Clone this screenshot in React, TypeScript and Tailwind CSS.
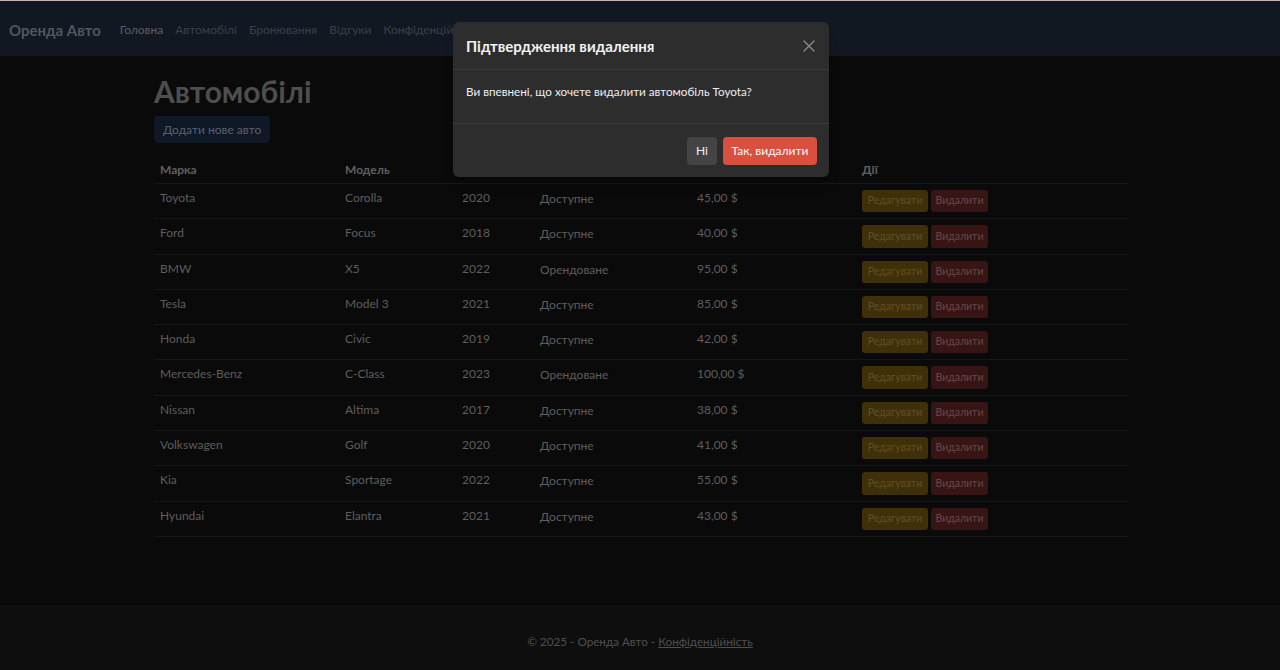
import { X } from "lucide-react"

type Car = {
  brand: string
  model: string
  year: number
  status: string
  price: string
}

const cars: Car[] = [
  { brand: "Toyota", model: "Corolla", year: 2020, status: "Доступне", price: "45,00 $" },
  { brand: "Ford", model: "Focus", year: 2018, status: "Доступне", price: "40,00 $" },
  { brand: "BMW", model: "X5", year: 2022, status: "Орендоване", price: "95,00 $" },
  { brand: "Tesla", model: "Model 3", year: 2021, status: "Доступне", price: "85,00 $" },
  { brand: "Honda", model: "Civic", year: 2019, status: "Доступне", price: "42,00 $" },
  { brand: "Mercedes-Benz", model: "C-Class", year: 2023, status: "Орендоване", price: "100,00 $" },
  { brand: "Nissan", model: "Altima", year: 2017, status: "Доступне", price: "38,00 $" },
  { brand: "Volkswagen", model: "Golf", year: 2020, status: "Доступне", price: "41,00 $" },
  { brand: "Kia", model: "Sportage", year: 2022, status: "Доступне", price: "55,00 $" },
  { brand: "Hyundai", model: "Elantra", year: 2021, status: "Доступне", price: "43,00 $" },
]

const navLinks = ["Головна", "Автомобілі", "Бронювання", "Відгуки", "Конфіденційність"]

export default function App() {
  return (
    <div
      className="relative flex h-[670px] flex-col overflow-hidden bg-[#0a0a0a]"
      style={{ fontFamily: "Lato, 'Open Sans', sans-serif" }}
    >
      {/* navbar */}
      <header className="h-[56px] shrink-0 border-t border-[#c9b3aa] bg-[#111822]">
        <div className="flex h-full items-center pl-[9px] pt-[3px]">
          <span className="mr-[19px] text-[15px] font-bold text-[#51565d]">Оренда Авто</span>
          <nav className="flex gap-[12px] text-[12px]">
            {navLinks.map((l, i) => (
              <span key={l} className={i === 0 ? "text-[#5a5f66]" : "text-[#3a4048]"}>
                {l}
              </span>
            ))}
          </nav>
        </div>
      </header>

      {/* main */}
      <main className="flex-1 px-[154px] pt-[17px]">
        <h1 className="text-[30px] font-bold leading-[36px] text-[#4e4e4e]">Автомобілі</h1>
        <button className="mt-[7px] h-[27px] rounded-[4px] bg-[#0f1827] px-[9px] text-[12px] text-[#59606b]">
          Додати нове авто
        </button>

        <table className="mt-[16px] w-[974px] table-fixed border-collapse text-[12px] text-[#5e5e5e]">
          <colgroup>
            <col className="w-[185px]" />
            <col className="w-[117px]" />
            <col className="w-[78px]" />
            <col className="w-[157px]" />
            <col className="w-[165px]" />
            <col />
          </colgroup>
          <thead>
            <tr className="border-b border-[#161616]">
              {["Марка", "Модель", "Рік", "Статус", "Ціна", "Дії"].map((h) => (
                <th key={h} className="px-[6px] pb-[4px] pt-[2px] text-left font-bold text-[#606060]">
                  {h}
                </th>
              ))}
            </tr>
          </thead>
          <tbody>
            {cars.map((c) => (
              <tr key={c.brand} className="border-b border-[#161616] align-top">
                <td className="px-[6px] pt-[5px]">{c.brand}</td>
                <td className="px-[6px] pt-[5px]">{c.model}</td>
                <td className="px-[6px] pt-[5px]">{c.year}</td>
                <td className="px-[6px] pt-[6px]">{c.status}</td>
                <td className="px-[6px] pt-[5px]">{c.price}</td>
                <td className="px-[6px] py-[6px]">
                  <div className="flex gap-[3px]">
                    <span className="flex h-[22.3px] w-[66px] items-center justify-center rounded-[3px] bg-[#40300a] text-[10.5px] text-[#5e5024]">
                      Редагувати
                    </span>
                    <span className="flex h-[22.3px] w-[57px] items-center justify-center rounded-[3px] bg-[#381515] text-[10.5px] text-[#6a4545]">
                      Видалити
                    </span>
                  </div>
                </td>
              </tr>
            ))}
          </tbody>
        </table>
      </main>

      {/* footer */}
      <footer className="flex h-[65px] shrink-0 justify-center bg-[#0e0e0e] pt-[28px] text-[11.7px] leading-[16px] text-[#4f4f4f]">
        <span>
          © 2025 - Оренда Авто - <span className="underline">Конфіденційність</span>
        </span>
      </footer>

      {/* modal */}
      <div className="absolute left-[453px] top-[22px] w-[376px] rounded-[6px] bg-[#2d2d2d] text-[#eeeeee] shadow-lg">
        <div className="flex h-[48px] items-center justify-between border-b border-[#3a3a3a] pl-[13px] pr-[10px]">
          <h5 className="pt-[2px] text-[15px] font-bold text-[#f2f2f2]">Підтвердження видалення</h5>
          <X className="h-[20px] w-[20px] text-[#8f8f8f]" strokeWidth={1.5} />
        </div>
        <div className="h-[54px] border-b border-[#3a3a3a] px-[13px] pt-[13px] text-[11.7px]">
          Ви впевнені, що хочете видалити автомобіль Toyota?
        </div>
        <div className="flex h-[53px] items-center justify-end gap-[6px] px-[12px] pt-[1px]">
          <button className="h-[28px] w-[30px] rounded-[4px] bg-[#444444] text-[12px] text-[#f0f0f0]">Ні</button>
          <button className="h-[28px] w-[94px] rounded-[4px] bg-[#d9503f] text-[12px] text-[#fafafa]">
            Так, видалити
          </button>
        </div>
      </div>
    </div>
  )
}
